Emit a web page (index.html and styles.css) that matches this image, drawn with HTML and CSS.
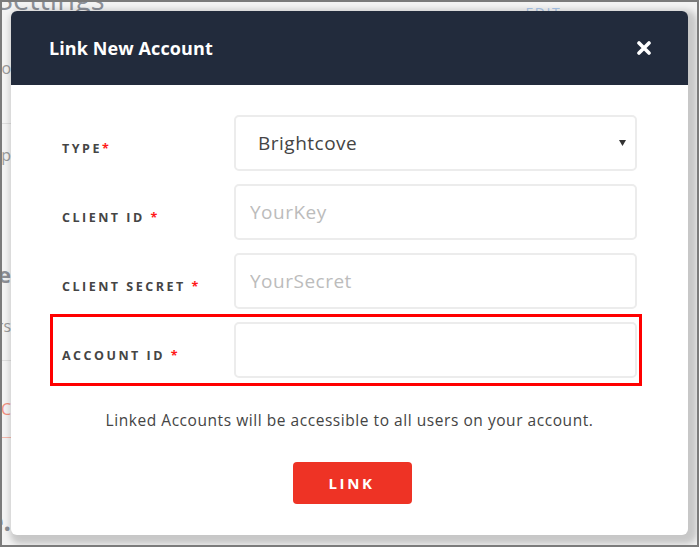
FILE: index.html
```html
<!DOCTYPE html>
<html lang="en">
<head>
<meta charset="utf-8">
<title>Link New Account</title>
<link rel="stylesheet" href="styles.css">
</head>
<body>
<div class="frame">
  <div class="page">
    <div class="topbar">
      <span class="page-title">Settings</span>
      <span class="edit">EDIT</span>
    </div>
    <div class="side">
      <div class="frag f-to">Settings to</div>
      <div class="rule r1"></div>
      <div class="frag f-p">Setup</div>
      <div class="frag f-se">Se</div>
      <div class="frag f-s">Users</div>
      <div class="rule r2"></div>
      <div class="frag f-c">C</div>
      <div class="rule r3"></div>
      <div class="frag f-e">Some.</div>
    </div>
  </div>

  <div class="modal">
    <div class="modal-header">
      <span class="modal-title">Link New Account</span>
      <svg class="close" width="14" height="14" viewBox="0 0 14 14" aria-hidden="true">
        <path d="M2 2 L12 12 M12 2 L2 12" stroke="#fff" stroke-width="3.6" stroke-linecap="round"/>
      </svg>
    </div>
    <div class="modal-body">
      <div class="fields">
        <div class="field">
          <label class="label">TYPE<span class="req">*</span></label>
          <div class="control select">
            <span>Brightcove</span>
            <svg class="caret" width="7" height="6" viewBox="0 0 7 6" aria-hidden="true"><path d="M0 0 H7 L3.5 6 Z" fill="#333"/></svg>
          </div>
        </div>
        <div class="field">
          <label class="label">CLIENT ID <span class="req">*</span></label>
          <input class="control" type="text" placeholder="YourKey">
        </div>
        <div class="field">
          <label class="label">CLIENT SECRET <span class="req">*</span></label>
          <input class="control" type="text" placeholder="YourSecret">
        </div>
        <div class="field highlighted">
          <label class="label">ACCOUNT ID <span class="req">*</span></label>
          <input class="control" type="text">
          <span class="highlight-box"></span>
        </div>
      </div>
      <p class="note">Linked Accounts will be accessible to all users on your account.</p>
      <div class="actions">
        <button class="btn-link" type="button">LINK</button>
      </div>
    </div>
  </div>
</div>
</body>
</html>
```

FILE: styles.css
```css
* { box-sizing: border-box; }

html, body {
  margin: 0;
  padding: 0;
  background: #ffffff;
}

body {
  font-family: "Open Sans", "Noto Sans", "Liberation Sans", sans-serif;
}

.frame {
  position: relative;
  width: 699px;
  height: 547px;
  border: 2px solid #7b7b7b;
  background: #f3f3f3;
  overflow: hidden;
}

/* background page (dimmed, mostly hidden) */
.page {
  display: flex;
  flex-direction: column;
  height: 100%;
}

.topbar {
  height: 10px;
  display: flex;
  align-items: flex-start;
  position: relative;
}

.page-title {
  margin-top: -21px;
  margin-left: -5px;
  font-size: 29px;
  line-height: 36px;
  color: #8c9098;
  white-space: nowrap;
}

.edit {
  margin-left: 421px;
  margin-top: 2px;
  font-size: 14px;
  letter-spacing: 1.5px;
  color: #a9c6ea;
  line-height: 18px;
}

.side {
  width: 9px;
  display: flex;
  flex-direction: column;
  overflow: hidden;
}

.frag {
  display: flex;
  justify-content: flex-end;
  white-space: nowrap;
  font-size: 16px;
  line-height: 20px;
  color: #9a9a9a;
}

.rule { height: 1px; background: #dddddd; }

.f-to { margin-top: 46px; }
.r1 { margin-top: 45px; }
.f-p { margin-top: 21px; }
.f-se { margin-top: 96px; font-size: 22px; line-height: 26px; font-weight: 700; color: #8d8f95; }
.f-s { margin-top: 29px; }
.r2 { margin-top: 24px; }
.f-c { margin-top: 38px; color: #f0907f; }
.r3 { margin-top: 18px; background: #f4b7ab; }
.f-e { margin-top: 68px; font-size: 26px; line-height: 30px; font-weight: 700; color: #8d8f95; }

/* modal */
.modal {
  position: absolute;
  left: 9px;
  top: 9px;
  width: 677px;
  height: 524px;
  background: #ffffff;
  border-radius: 6px;
  box-shadow: 4px 4px 6px 5px rgba(0, 0, 0, 0.18);
}

.modal-header {
  height: 74px;
  background: #222b3c;
  border-radius: 6px 6px 0 0;
  display: flex;
  align-items: center;
  justify-content: space-between;
  padding: 0 37px 0 38px;
}

.modal-title {
  color: #ffffff;
  font-size: 18px;
  font-weight: 700;
  letter-spacing: 0.1px;
}

.close { display: block; }

.modal-body {
  padding: 30px 51px 0 51px;
}

.fields {
  display: flex;
  flex-direction: column;
  gap: 13px;
}

.field {
  display: flex;
  align-items: center;
  height: 56px;
  position: relative;
}

.label {
  width: 172px;
  flex: none;
  padding-top: 10px;
  font-size: 12.5px;
  font-weight: 700;
  letter-spacing: 2.5px;
  color: #454545;
}

.req { color: #ff1a1a; letter-spacing: 0; }

.control {
  flex: 1;
  height: 56px;
  border: 2px solid #ececec;
  border-radius: 5px;
  background: #ffffff;
  font-family: inherit;
  font-size: 19px;
  letter-spacing: 0.5px;
  color: #444444;
  padding: 0 14px;
  outline: none;
}

.control::placeholder { color: #bcbcbc; }

.select {
  display: flex;
  align-items: center;
  justify-content: space-between;
  padding: 0 9px 0 22px;
}

.caret { display: block; }

.highlight-box {
  position: absolute;
  top: -8px;
  bottom: -8px;
  left: -12px;
  right: -5px;
  border: 3px solid #ff0000;
  pointer-events: none;
}

.note {
  margin: 32px 0 0;
  text-align: center;
  font-size: 15.5px;
  letter-spacing: 0.55px;
  line-height: 20px;
  color: #444444;
}

.actions {
  display: flex;
  justify-content: center;
  margin-top: 32px;
  padding-left: 6px;
}

.btn-link {
  width: 119px;
  height: 42px;
  border: none;
  border-radius: 4px;
  background: #ee3325;
  color: #ffffff;
  font-family: inherit;
  font-size: 15px;
  font-weight: 700;
  letter-spacing: 2.6px;
  padding-left: 4px;
}
```
